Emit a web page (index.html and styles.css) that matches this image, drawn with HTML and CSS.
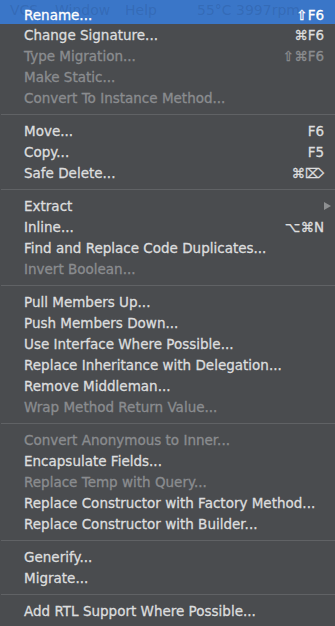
FILE: index.html
```html
<!DOCTYPE html>
<html lang="en">
<head>
    <meta charset="UTF-8">
    <meta name="viewport" content="width=device-width, initial-scale=1.0">
    <title>Refactor</title>
    <link rel="stylesheet" href="styles.css">
</head>
<body>
    <div class="menu">
        <ul class="menu-group">
            <li class="menu-item active">
                <span class="menubar-ghost">
                    <span class="ghost-vcs">VCS</span><span class="ghost-window">Window</span><span class="ghost-help">Help</span><span class="ghost-temp">55°C 3997rpm</span>
                </span>
                <span class="label">Rename...</span><span class="shortcut">⇧F6</span>
            </li>
            <li class="menu-item"><span class="label">Change Signature...</span><span class="shortcut">⌘F6</span></li>
            <li class="menu-item disabled"><span class="label">Type Migration...</span><span class="shortcut">⇧⌘F6</span></li>
            <li class="menu-item disabled"><span class="label">Make Static...</span></li>
            <li class="menu-item disabled"><span class="label">Convert To Instance Method...</span></li>
        </ul>
        <hr class="separator">
        <ul class="menu-group">
            <li class="menu-item"><span class="label">Move...</span><span class="shortcut">F6</span></li>
            <li class="menu-item"><span class="label">Copy...</span><span class="shortcut">F5</span></li>
            <li class="menu-item"><span class="label">Safe Delete...</span><span class="shortcut">⌘⌦</span></li>
        </ul>
        <hr class="separator">
        <ul class="menu-group">
            <li class="menu-item submenu"><span class="label">Extract</span><span class="arrow"></span></li>
            <li class="menu-item"><span class="label">Inline...</span><span class="shortcut">⌥⌘N</span></li>
            <li class="menu-item"><span class="label">Find and Replace Code Duplicates...</span></li>
            <li class="menu-item disabled"><span class="label">Invert Boolean...</span></li>
        </ul>
        <hr class="separator">
        <ul class="menu-group">
            <li class="menu-item"><span class="label">Pull Members Up...</span></li>
            <li class="menu-item"><span class="label">Push Members Down...</span></li>
            <li class="menu-item"><span class="label">Use Interface Where Possible...</span></li>
            <li class="menu-item"><span class="label">Replace Inheritance with Delegation...</span></li>
            <li class="menu-item"><span class="label">Remove Middleman...</span></li>
            <li class="menu-item disabled"><span class="label">Wrap Method Return Value...</span></li>
        </ul>
        <hr class="separator">
        <ul class="menu-group">
            <li class="menu-item disabled"><span class="label">Convert Anonymous to Inner...</span></li>
            <li class="menu-item"><span class="label">Encapsulate Fields...</span></li>
            <li class="menu-item disabled"><span class="label">Replace Temp with Query...</span></li>
            <li class="menu-item"><span class="label">Replace Constructor with Factory Method...</span></li>
            <li class="menu-item"><span class="label">Replace Constructor with Builder...</span></li>
        </ul>
        <hr class="separator">
        <ul class="menu-group">
            <li class="menu-item"><span class="label">Generify...</span></li>
            <li class="menu-item"><span class="label">Migrate...</span></li>
        </ul>
        <hr class="separator">
        <ul class="menu-group">
            <li class="menu-item"><span class="label">Add RTL Support Where Possible...</span></li>
        </ul>
    </div>
</body>
</html>
```

FILE: styles.css
```css
/* --- reset --- */
* {
    box-sizing: border-box;
    margin: 0;
    padding: 0;
}

body {
    background: #4a4c4f;
    font-family: 'DejaVu Sans', 'Liberation Sans', sans-serif;
    font-size: 13.5px;
    color: #dcddde;
    width: 335px;
    height: 626px;
    overflow: hidden;
}

/* --- menu --- */
.menu {
    display: flex;
    flex-direction: column;
    padding-bottom: 4px;
}

.menu-group {
    list-style: none;
    display: flex;
    flex-direction: column;
}

.menu-item {
    position: relative;
    display: flex;
    align-items: center;
    justify-content: space-between;
    height: 21px;
    padding: 0 11px 0 24px;
    white-space: nowrap;
}

/* 글자를 살짝 두껍게 (원본 렌더링에 맞춤) */
.menu-item .label,
.menu-item .shortcut {
    position: relative;
    -webkit-text-stroke: 0.3px currentColor;
}

/* 선택된 항목 (파란 하이라이트) */
.menu-item.active {
    height: 24px;
    padding-top: 5px;
    background: #3a76c8;
    color: #ffffff;
}

.menu-item.disabled {
    color: #8a8c8f;
}

/* 반투명 메뉴 뒤로 비치는 메뉴바 글자 */
.menubar-ghost {
    position: absolute;
    left: 0;
    top: 2px;
    width: 100%;
    height: 18px;
    font-size: 14px;
    color: rgba(30, 60, 110, 0.2);
}

.menubar-ghost span {
    position: absolute;
    top: 0;
}

.ghost-vcs { left: 10px; }
.ghost-window { left: 55px; }
.ghost-help { left: 125px; }
.ghost-temp { left: 197px; }

/* 하위 메뉴 화살표 */
.arrow {
    width: 0;
    height: 0;
    margin-right: -7px;
    border-top: 4px solid transparent;
    border-bottom: 4px solid transparent;
    border-left: 7px solid #8e9092;
}

/* --- 구분선 --- */
.separator {
    border: none;
    height: 1px;
    background: #606265;
    margin: 6px 0 5px 1px;
}
```
